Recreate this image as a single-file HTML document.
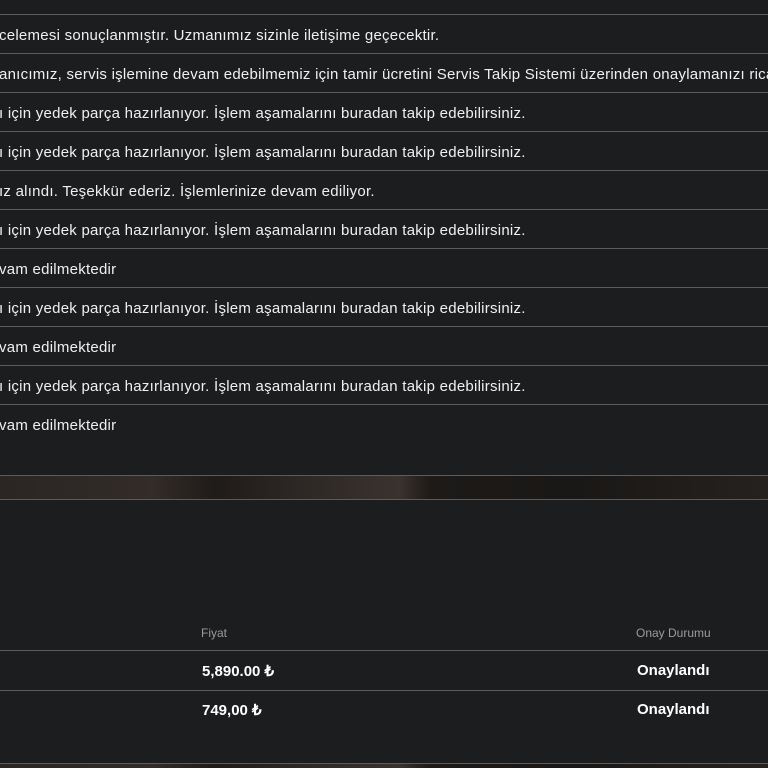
<!DOCTYPE html>
<html><head><meta charset="utf-8"><style>
body{margin:0;width:768px;height:768px;overflow:hidden;background:#1c1d1f;font-family:"Liberation Sans",sans-serif;color:#f0f0f0;position:relative}
.r{position:absolute;left:0;width:768px;height:38px;border-top:1px solid #5a5b5d;font-size:15px;line-height:42px;white-space:nowrap;letter-spacing:.25px;overflow:hidden}
.t{position:absolute;left:-1px}
.band{position:absolute;left:0;width:768px;background:linear-gradient(90deg,#2a2624 0%,#332c28 20%,#1f1b19 28%,#2e2926 40%,#3a322d 52%,#1d1a18 56%,#1a1816 75%,#25211e 100%)}
.h{position:absolute;font-size:12px;color:#9a9b9d}
.v{position:absolute;font-size:15px;color:#fff;font-weight:bold}
.hl{position:absolute;left:0;width:768px;height:1px;background:#5a5b5d}
</style></head><body>
<div class="r" style="top:14px"><span class="t">celemesi sonuçlanmıştır. Uzmanımız sizinle iletişime geçecektir.</span></div>
<div class="r" style="top:53px"><span class="t">anıcımız, servis işlemine devam edebilmemiz için tamir ücretini Servis Takip Sistemi üzerinden onaylamanızı rica</span></div>
<div class="r" style="top:92px"><span class="t">ı için yedek parça hazırlanıyor. İşlem aşamalarını buradan takip edebilirsiniz.</span></div>
<div class="r" style="top:131px"><span class="t">ı için yedek parça hazırlanıyor. İşlem aşamalarını buradan takip edebilirsiniz.</span></div>
<div class="r" style="top:170px"><span class="t">ız alındı. Teşekkür ederiz. İşlemlerinize devam ediliyor.</span></div>
<div class="r" style="top:209px"><span class="t">ı için yedek parça hazırlanıyor. İşlem aşamalarını buradan takip edebilirsiniz.</span></div>
<div class="r" style="top:248px"><span class="t">vam edilmektedir</span></div>
<div class="r" style="top:287px"><span class="t">ı için yedek parça hazırlanıyor. İşlem aşamalarını buradan takip edebilirsiniz.</span></div>
<div class="r" style="top:326px"><span class="t">vam edilmektedir</span></div>
<div class="r" style="top:365px"><span class="t">ı için yedek parça hazırlanıyor. İşlem aşamalarını buradan takip edebilirsiniz.</span></div>
<div class="r" style="top:404px"><span class="t">vam edilmektedir</span></div>
<div class="hl" style="top:475px"></div>
<div class="band" style="top:476px;height:23px"></div>
<div class="hl" style="top:499px"></div>
<div class="h" style="left:201px;top:626px">Fiyat</div>
<div class="h" style="left:636px;top:626px">Onay Durumu</div>
<div class="hl" style="top:650px"></div>
<div class="v" style="left:202px;top:662px">5,890.00 ₺</div>
<div class="v" style="left:637px;top:662px">Onaylandı</div>
<div class="hl" style="top:690px"></div>
<div class="v" style="left:202px;top:701px">749,00 ₺</div>
<div class="v" style="left:637px;top:701px">Onaylandı</div>
<div class="hl" style="top:763px"></div>
<div class="band" style="top:764px;height:4px"></div>
</body></html>
